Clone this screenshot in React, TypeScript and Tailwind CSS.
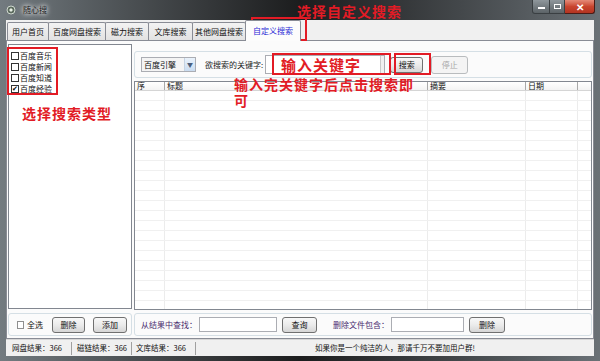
import React from 'react';

const tabs = [
  { label: '用户首页', w: 'w-[42px]' },
  { label: '百度网盘搜索', w: 'w-[58px]' },
  { label: '磁力搜索', w: 'w-[44px]' },
  { label: '文库搜索', w: 'w-[45px]' },
  { label: '其他网盘搜索', w: 'w-[54px]' },
];

const types = [
  { label: '百度音乐', checked: false },
  { label: '百度新闻', checked: false },
  { label: '百度知道', checked: false },
  { label: '百度经验', checked: true },
];

const Btn: React.FC<{ children: React.ReactNode; className?: string; disabled?: boolean }> = ({
  children,
  className = '',
  disabled = false,
}) => (
  <div
    className={`flex items-center justify-center rounded-[3px] border text-[8px] leading-none ${
      disabled
        ? 'border-[#b9bcbe] bg-[#f4f4f4] text-[#a8a8a8]'
        : 'border-[#707070] bg-linear-to-b from-[#f8f8f8] via-[#ebebeb] to-[#d6d6d6] text-[#111]'
    } ${className}`}
  >
    {children}
  </div>
);

const Box: React.FC<{ checked?: boolean }> = ({ checked }) => (
  <span className="flex h-[8px] w-[8px] items-center justify-center border border-[#333] bg-white text-[7px] leading-none text-black">
    {checked ? '✔' : ''}
  </span>
);

const App: React.FC = () => {
  const rows = Array.from({ length: 22 });

  return (
    <div className="relative flex h-[361px] w-[600px] flex-col overflow-hidden bg-linear-to-r from-[#737b80] via-[#1c1d1e] to-[#6a7176] font-['Noto_Sans_CJK_SC',sans-serif] text-[#111]">
      {/* title bar */}
      <div className="flex h-[20px] items-start justify-between">
        <div className="flex items-center gap-[7px] pl-[6px] pt-[5px]">
          <svg width="10" height="10" viewBox="0 0 10 10">
            <circle cx="5" cy="5" r="4" fill="#5c6b5e" stroke="#cfd8cf" strokeWidth="1" />
            <path d="M3 5 L5 3 L7 5 L5 7 Z" fill="#e8efe6" />
          </svg>
          <span className="text-[8px] leading-none text-[#1b1b1b] [text-shadow:0_0_4px_#ffffff,0_0_6px_#ffffff]">
            随心搜
          </span>
        </div>
        <div className="mr-[5px] flex h-[14px]">
          <div className="flex w-[18px] items-center justify-center rounded-bl-[3px] border border-t-0 border-[#3a3f42] bg-linear-to-b from-[#8f979c] to-[#5c6367]">
            <span className="mt-[3px] h-[2px] w-[7px] bg-white" />
          </div>
          <div className="flex w-[15px] items-center justify-center border border-l-0 border-t-0 border-[#3a3f42] bg-linear-to-b from-[#8f979c] to-[#5c6367]">
            <span className="h-[5px] w-[7px] border border-white" />
          </div>
          <div className="flex w-[30px] items-center justify-center rounded-br-[3px] border border-l-0 border-t-0 border-[#4a1c16] bg-linear-to-b from-[#e48a78] via-[#c9452f] to-[#b33421] text-[10px] font-bold leading-none text-white">
            ✕
          </div>
        </div>
      </div>

      {/* client */}
      <div className="mx-[6px] flex flex-1 flex-col bg-[#f0f0f0]">
        {/* tab strip */}
        <div className="flex h-[20px] items-end pl-[1px]">
          {tabs.map((t) => (
            <div
              key={t.label}
              className={`${t.w} -mr-[1px] flex h-[18px] items-center justify-center rounded-t-[2px] border border-b-0 border-[#898c95] bg-linear-to-b from-[#f3f3f3] to-[#e2e2e2] text-[8px] leading-none`}
            >
              {t.label}
            </div>
          ))}
          <div className="relative z-10 -mb-[1px] flex h-[21px] w-[56px] items-center justify-center rounded-t-[2px] border border-b-0 border-[#898c95] bg-[#fcfcfc] text-[8px] leading-none text-[#2b2bd6]">
            自定义搜索
          </div>
        </div>

        {/* tab panel */}
        <div className="flex h-[299px] gap-[2px] border border-[#898c95] bg-[#fbfbfb] px-[1px] pb-[2px]">
          {/* left column */}
          <div className="flex w-[124px] flex-col gap-[4px] pt-[3px]">
            <div className="flex flex-1 flex-col border border-[#828790] bg-white pl-[2px] pt-[5px]">
              {types.map((t) => (
                <div key={t.label} className="flex h-[11px] items-center gap-[1px] text-[8px] leading-none">
                  <Box checked={t.checked} />
                  <span>{t.label}</span>
                </div>
              ))}
            </div>
            <div className="flex h-[23px] items-center rounded-[3px] border border-[#d5dfe5] pl-[8px]">
              <span className="h-[8px] w-[7px] border border-[#8f8f8f] bg-white" />
              <span className="ml-[3px] text-[8px] leading-none">全选</span>
              <Btn className="ml-[9px] h-[16px] w-[33px]">删除</Btn>
              <Btn className="ml-[8px] h-[16px] w-[34px]">添加</Btn>
            </div>
          </div>

          {/* right column */}
          <div className="flex flex-1 flex-col pt-[10px]">
            <div className="flex h-[27px] items-center rounded-[3px] border border-[#d5dfe5] pl-[6px]">
              <div className="flex h-[15px] w-[55px] items-center justify-between border border-[#abadb3] bg-[#f4f4f4] pl-[2px] text-[8px] leading-none">
                <span>百度引擎</span>
                <span className="flex h-full w-[11px] items-center justify-center border-l border-[#c5d3e2] bg-linear-to-b from-[#eaf2fb] to-[#c9dcf0] text-[6px] text-[#4a5e7c]">
                  ▼
                </span>
              </div>
              <span className="ml-[9px] text-[8px] leading-none text-[#222]">欲搜索的关键字:</span>
              <div className="ml-[2px] flex h-[19px] w-[120px] items-stretch justify-end border border-[#abadb3] bg-white">
                <span className="w-[4px] border-l border-[#c8c8c8] bg-[#f0f0f0]" />
              </div>
              <Btn className="ml-[5px] h-[16px] w-[33px]">搜索</Btn>
              <Btn disabled className="ml-[8px] h-[18px] w-[37px]">
                停止
              </Btn>
            </div>

            {/* list view */}
            <div className="mt-[3px] flex h-[229px] flex-col overflow-hidden border border-[#828790] bg-white">
              <div className="flex h-[12px] border-b border-[#d5d5d5] bg-linear-to-b from-white to-[#f3f3f3] text-[8px] leading-none">
                <div className="flex w-[30px] items-center border-r border-[#a9a9a9] pl-[2px]">序</div>
                <div className="flex w-[263px] items-center border-r border-[#a9a9a9] pl-[2px]">标题</div>
                <div className="flex w-[98px] items-center border-r border-[#a9a9a9] pl-[2px]">摘要</div>
                <div className="flex w-[52px] items-center border-r border-[#a9a9a9] pl-[2px]">日期</div>
                <div className="flex-1" />
              </div>
              {rows.map((_, i) => (
                <div key={i} className="flex h-[10px] shrink-0 border-b border-[#f0f0f0]">
                  <div className="w-[30px] border-r border-[#ececec]" />
                  <div className="w-[263px] border-r border-[#ececec]" />
                  <div className="w-[98px] border-r border-[#ececec]" />
                  <div className="w-[52px] border-r border-[#ececec]" />
                  <div className="flex-1" />
                </div>
              ))}
            </div>

            <div className="mt-[3px] flex h-[23px] items-center rounded-[3px] border border-[#d5dfe5] pl-[6px] text-[8px] leading-none">
              <span className="text-[#4a2d6e]">从结果中查找：</span>
              <div className="ml-[2px] h-[15px] w-[78px] border border-[#abadb3] bg-white" />
              <Btn className="ml-[5px] h-[16px] w-[35px]">查询</Btn>
              <span className="ml-[16px] text-[#4a2d6e]">删除文件包含：</span>
              <div className="ml-[2px] h-[15px] w-[73px] border border-[#abadb3] bg-white" />
              <Btn className="ml-[5px] h-[16px] w-[36px]">删除</Btn>
            </div>
          </div>
        </div>

        {/* status bar */}
        <div className="flex h-[17px] items-center border-t border-[#d7d7d7] text-[7.5px] leading-none">
          <div className="flex h-[13px] w-[66px] items-center border-r border-[#a0a0a0] pl-[6px]">网盘结果：366</div>
          <div className="flex h-[13px] w-[60px] items-center border-r border-[#a0a0a0] pl-[5px]">磁链结果：366</div>
          <div className="flex h-[13px] w-[64px] items-center border-r border-[#a0a0a0] pl-[4px]">文库结果：366</div>
          <div className="flex h-[13px] flex-1 items-center justify-center">如果你是一个纯洁的人，那请千万不要加用户群!</div>
        </div>
      </div>
      <div className="h-[5px]" />

      {/* annotations */}
      <div className="pointer-events-none absolute left-[251px] top-[17px] h-[24px] w-[56px] border-2 border-[#e21b25]" />
      <div className="pointer-events-none absolute left-[7px] top-[47px] h-[48px] w-[51px] border-2 border-[#e21b25]" />
      <div className="pointer-events-none absolute left-[272px] top-[53px] h-[22px] w-[119px] border-2 border-[#e21b25]" />
      <div className="pointer-events-none absolute left-[394px] top-[53px] h-[22px] w-[37px] border-2 border-[#e21b25]" />

      <div className="absolute left-[297px] top-[4px] text-[14px] font-bold leading-none tracking-[1px] text-[#e21b25]">
        选择自定义搜索
      </div>
      <div className="absolute left-[22px] top-[106px] text-[14px] font-bold leading-none tracking-[1px] text-[#e21b25]">
        选择搜索类型
      </div>
      <div className="absolute left-[281px] top-[57px] text-[15px] font-bold leading-none tracking-[1px] text-[#e21b25]">
        输入关键字
      </div>
      <div className="absolute left-[234px] top-[76px] w-[185px] text-[14px] font-bold leading-[16px] tracking-[1px] text-[#e21b25]">
        输入完关键字后点击搜索即可
      </div>
    </div>
  );
};

export default App;
